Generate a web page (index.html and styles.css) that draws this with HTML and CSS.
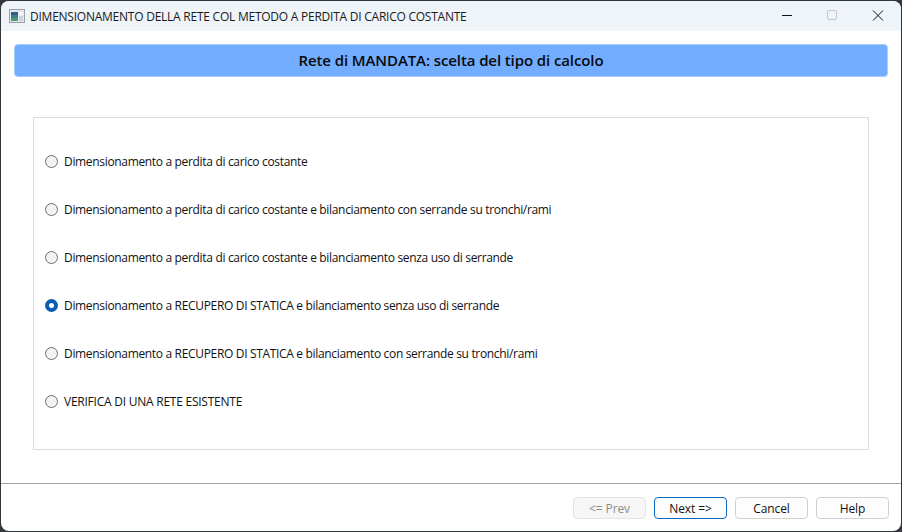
FILE: index.html
```html
<!DOCTYPE html>
<html lang="it">
<head>
<meta charset="utf-8">
<title>Dimensionamento</title>
<link rel="stylesheet" href="styles.css">
</head>
<body>
<div class="window">
  <header class="titlebar">
    <svg class="appicon" width="16" height="14" viewBox="0 0 16 14">
      <rect x="0.5" y="0.5" width="15" height="13" fill="#e4e8ec" stroke="#9a9fa6"/>
      <rect x="2" y="3" width="7" height="9" fill="#3f7f8c"/>
      <rect x="2" y="3" width="7" height="3" fill="#2f5f88"/>
      <rect x="2" y="9" width="7" height="3" fill="#4f9a70"/>
      <rect x="10" y="3" width="4" height="3" fill="#f7f9fb"/>
      <rect x="10" y="7" width="4" height="5" fill="#c9d3da"/>
    </svg>
    <span class="title">DIMENSIONAMENTO DELLA RETE COL METODO A PERDITA DI CARICO COSTANTE</span>
    <div class="controls">
      <svg class="ctl" width="46" height="30" viewBox="0 0 46 30"><path d="M19 14.5h10" stroke="#111" fill="none"/></svg>
      <svg class="ctl" width="46" height="30" viewBox="0 0 46 30"><rect x="18.5" y="9.5" width="9" height="9" rx="1.5" stroke="#c4c6c9" fill="none"/></svg>
      <svg class="ctl" width="46" height="30" viewBox="0 0 46 30"><path d="M18 9.5l10 10M28 9.5l-10 10" stroke="#111" fill="none"/></svg>
    </div>
  </header>
  <main class="content">
    <h1 class="banner">Rete di MANDATA: scelta del tipo di calcolo</h1>
    <section class="group">
      <label class="option"><span class="radio"></span>Dimensionamento a perdita di carico costante</label>
      <label class="option"><span class="radio"></span>Dimensionamento a perdita di carico costante e bilanciamento con serrande su tronchi/rami</label>
      <label class="option"><span class="radio"></span>Dimensionamento a perdita di carico costante e bilanciamento senza uso di serrande</label>
      <label class="option"><span class="radio checked"></span>Dimensionamento a RECUPERO DI STATICA e bilanciamento senza uso di serrande</label>
      <label class="option"><span class="radio"></span>Dimensionamento a RECUPERO DI STATICA e bilanciamento con serrande su tronchi/rami</label>
      <label class="option caps"><span class="radio"></span>VERIFICA DI UNA RETE ESISTENTE</label>
    </section>
  </main>
  <footer class="footer">
    <button class="btn disabled" type="button">&lt;= Prev</button>
    <button class="btn primary" type="button">Next =&gt;</button>
    <button class="btn" type="button">Cancel</button>
    <button class="btn" type="button">Help</button>
  </footer>
</div>
</body>
</html>
```
FILE: styles.css
```css
* { box-sizing: border-box; }
html, body { margin: 0; height: 100%; }
body {
  background: #33363d;
  font-family: "Open Sans", "Noto Sans", sans-serif;
  font-size: 12px;
  color: #111;
  overflow: hidden;
  padding: 1px 0 0 1px;
}
.window {
  width: 900px;
  height: 530px;
  background: #fff;
  border-radius: 8px;
  display: flex;
  flex-direction: column;
  overflow: hidden;
}
.titlebar {
  height: 30px;
  flex: none;
  background: #eff4f9;
  display: flex;
  align-items: center;
  padding-left: 8px;
}
.appicon { flex: none; margin-right: 5px; }
.title { flex: 1; font-size: 12px; letter-spacing: -0.24px; white-space: nowrap; color: #1a1a1a; }
.controls { display: flex; }
.ctl { display: block; }
.content { flex: 1; display: flex; flex-direction: column; padding: 13px 13px 0; min-height: 0; }
.banner {
  margin: 0;
  height: 33px;
  background: #72adff;
  border: 1px solid #a6cbfd;
  border-radius: 4px;
  font-size: 15px;
  font-weight: 600;
  line-height: 31px;
  text-align: center;
  letter-spacing: -0.1px;
  color: #0a0a0a;
}
.group {
  margin: 40px 19px 0;
  height: 333px;
  border: 1px solid #dcdcdc;
  padding: 19px 11px;
  display: flex;
  flex-direction: column;
}
.option {
  height: 48px;
  flex: none;
  display: flex;
  align-items: center;
  white-space: nowrap;
  letter-spacing: -0.33px;
  font-size: 12px;
}
.option.caps { letter-spacing: -0.24px; }
.radio {
  width: 13px;
  height: 13px;
  flex: none;
  margin-right: 6px;
  border: 1px solid #6e6e6e;
  border-radius: 50%;
  background: #f3f3f3;
}
.radio.checked { background: #fff; border: 4px solid #0a5fb4; }
.footer {
  flex: none;
  height: 48px;
  border-top: 1px solid #a0a0a0;
  display: flex;
  justify-content: flex-end;
  gap: 8px;
  padding: 13px 12px 0 0;
}
.btn {
  width: 73px;
  height: 22px;
  padding: 0;
  background: #fdfdfd;
  border: 1px solid #d0d0d0;
  border-radius: 4px;
  font: inherit;
  color: #111;
  letter-spacing: -0.1px;
}
.btn.primary { border-color: #0a67c0; }
.btn.disabled { background: #f6f6f6; border-color: #e4e4e4; color: #8c8c8c; }
```
